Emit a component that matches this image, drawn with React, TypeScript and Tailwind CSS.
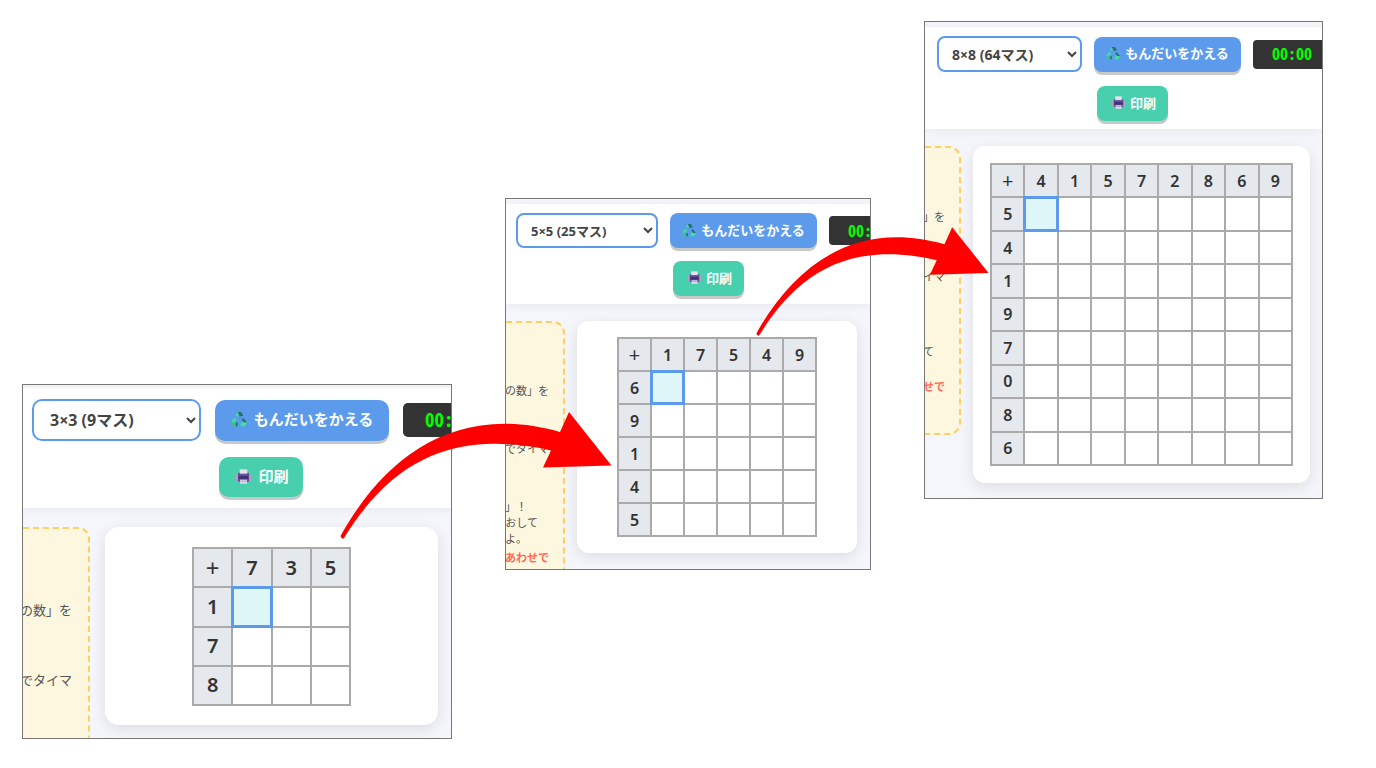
import React, { useState } from 'react';
import clsx from 'clsx';

type Line = { text: string; space: string; className?: string };

interface SheetProps {
  id: string;
  large?: boolean;
  label: string;
  time: string;
  top: number[];
  side: number[];
  lines: Line[];
  className: string;
  toolbarClass: string;
  selectClass: string;
  printRowClass: string;
  noteClass: string;
  cardClass: string;
  tableClass: string;
  rowClass: string;
}

const RecycleIcon: React.FC<{ className: string }> = ({ className }) => (
  <svg viewBox="0 0 16 16" className={className} aria-hidden="true">
    <path d="M4.6 4.2 6.4 1h2.4L7.2 5.8z" fill="#43dda0" />
    <path d="M6.6 1h3.6l2.2 3.8-3.6.8L7.6 3z" fill="#256f6c" />
    <path d="M2.8 7 6 7.6 4 11 .2 11z" fill="#43dda0" />
    <path d="M.2 11h3.6l2.8.6v3.6H2z" fill="#35c48d" />
    <path d="m4.8 11.4 1.8.2v3.6H4.8z" fill="#256f6c" />
    <path d="m12.6 7 3.2 4.4-2 1-3.4-4z" fill="#256f6c" />
    <path d="M9 13.2 11.4 11l4.4.6-1.6 3.6h-3.4z" fill="#43dda0" />
  </svg>
);

const PrinterIcon: React.FC<{ className: string }> = ({ className }) => (
  <svg viewBox="0 0 16 16" className={className} aria-hidden="true">
    <rect x="0" y="4.6" width="16" height="9" rx="2" fill="#b9a0bf" />
    <rect x="2" y="4" width="12" height="9.6" rx="1" fill="#5f50a0" />
    <rect x="4" y="0.4" width="8" height="4.6" fill="#e4e0ee" />
    <rect x="3" y="7.4" width="10" height="3.2" fill="#40326e" />
    <rect x="4.4" y="11.4" width="7.2" height="4.4" fill="#dcd8ea" />
    <rect x="5.4" y="12.4" width="5.2" height="1" fill="#a7a1bd" />
  </svg>
);

const Arrow: React.FC<{ className: string }> = ({ className }) => (
  <svg viewBox="340 412 272 128" className={clsx('absolute z-10 pointer-events-none', className)} aria-hidden="true">
    <path
      d="M340.5 536C384 458 455 402 560 432L569 412 611.5 465.5 543 467.5 551 450.5C460 430 395 455 344 538Q342 540 340.5 536Z"
      fill="#ff0000"
    />
  </svg>
);

const Sheet: React.FC<SheetProps> = (props) => {
  const [size, setSize] = useState(props.label);
  const { large, top, side } = props;

  return (
    <section className={clsx('overflow-hidden border border-[#777] bg-[#f5f6fb]', props.className)}>
      {/* Toolbar */}
      <div className={clsx('relative bg-white shadow-[0_2px_10px_rgba(0,0,0,0.06)] whitespace-nowrap', props.toolbarClass)}>
        <div className={clsx('flex items-center', large ? 'gap-[14px]' : 'gap-3')}>
          <select
            id={props.id}
            aria-label="マスの数"
            value={size}
            onChange={e => setSize(e.target.value)}
            className={clsx(
              "shrink-0 border-2 border-[#5c9bec] bg-white font-bold text-[#444] font-['Noto_Sans','Noto_Sans_CJK_JP',sans-serif]",
              props.selectClass
            )}
          >
            <option>{props.label}</option>
          </select>
          <button
            className={clsx(
              'flex shrink-0 items-center justify-center bg-[#5c9bec] pb-0.5 font-bold text-white',
              large
                ? 'h-[41px] w-[174px] gap-[7px] rounded-[10px] text-[15px] shadow-[0_3px_0_#c8c8c8]'
                : 'h-[35px] w-[147px] gap-[5px] rounded-lg text-[13px] shadow-[0_3px_0_#c8c8c8]'
            )}
          >
            <RecycleIcon className={large ? 'size-4' : 'size-[14px]'} />
            もんだいをかえる
          </button>
          <div
            className={clsx(
              "flex shrink-0 items-center bg-[#333] pb-0.5 font-bold text-[#00ff00] font-['Noto_Sans_Mono_CJK_JP','Noto_Sans_CJK_JP',monospace] [font-feature-settings:'hwid']",
              large ? 'h-[34px] w-24 rounded-[5px] pl-[22px] text-[19px]' : 'h-[29px] w-20 rounded-[4px] pl-[19px] text-base'
            )}
          >
            {props.time}
          </div>
        </div>
        <div className={clsx('flex', props.printRowClass)}>
          <button
            className={clsx(
              'flex items-center justify-center bg-[#48cfae] pb-0.5 font-bold text-white',
              large
                ? 'h-10 w-[84px] gap-[7px] rounded-[10px] pl-[3px] text-[15px] shadow-[0_3px_0_#c8c8c8]'
                : 'h-[35px] w-[71px] gap-[5px] rounded-lg pl-[3px] text-[13px] shadow-[0_3px_0_#c8c8c8]'
            )}
          >
            <PrinterIcon className={large ? 'size-[15px]' : 'size-[13px]'} />
            印刷
          </button>
        </div>
      </div>

      {/* Notes and question grid */}
      <div className="flex items-start">
        <aside
          className={clsx(
            'shrink-0 overflow-hidden border-2 border-l-0 border-dashed border-[#fdd063] bg-[#fef7df] text-[#555] whitespace-nowrap',
            props.noteClass
          )}
        >
          {props.lines.map(line => (
            <p key={line.text} className={clsx('flex justify-end', line.space, line.className)}>{line.text}</p>
          ))}
        </aside>
        <div className={clsx('flex flex-1 justify-center bg-white shadow-[0_4px_15px_rgba(0,0,0,0.1)]', props.cardClass)}>
          <table className={clsx("table-fixed border-collapse text-[#333] font-['Noto_Sans',sans-serif]", large ? 'text-xl' : 'text-base', props.tableClass)}>
            <tbody>
              <tr className={props.rowClass}>
                <th className={clsx('border-2 border-[#aaa] bg-[#e5e8ed] p-0 font-normal leading-none', large ? 'text-2xl' : 'text-xl')}>+</th>
                {top.map(n => (
                  <th key={n} className="border-2 border-[#aaa] bg-[#e5e8ed] p-0 font-semibold">{n}</th>
                ))}
              </tr>
              {side.map((n, r) => (
                <tr key={n} className={props.rowClass}>
                  <th className="border-2 border-[#aaa] bg-[#e5e8ed] p-0 font-semibold">{n}</th>
                  {top.map((m, c) => (
                    <td
                      key={m}
                      className={clsx(
                        'border-2 border-[#aaa] p-0',
                        r === 0 && c === 0 ? 'relative bg-[#dff6f8] outline-3 -outline-offset-2 outline-[#5c9bec]' : 'bg-white'
                      )}
                    />
                  ))}
                </tr>
              ))}
            </tbody>
          </table>
        </div>
      </div>
    </section>
  );
};

export default function App() {
  return (
    <main className="flex min-h-screen items-start gap-[53px] bg-white pl-[22px] pr-[53px] font-['Noto_Sans_CJK_JP',sans-serif]">
      <div className="relative mt-[384px] min-w-0 grow-[430] basis-0">
        <Sheet
          id="size-3"
          large
          label="3×3 (9マス)"
          time="00:00"
          top={[7, 3, 5]}
          side={[1, 7, 8]}
          lines={[
            { text: 'の数」を', space: 'pt-[71px]' },
            { text: 'でタイマ', space: 'pt-[50px]' },
          ]}
          className="pt-[3px]"
          toolbarClass="pt-[11px] pb-[11px] pl-[9px]"
          selectClass="h-[42px] w-[169px] rounded-[10px] px-3 text-base"
          printRowClass="pl-[187px] pt-4"
          noteClass="mt-[19px] h-[227px] w-[67px] rounded-tr-xl pr-4 text-[13px] leading-5 -mb-4"
          cardClass="mt-[19px] mb-[13px] ml-[15px] mr-[13px] rounded-[14px] pt-5 pb-[19px]"
          tableClass="h-[159px] w-[159px]"
          rowClass="h-[39px]"
        />
        <Arrow className="-right-[160px] top-[28px] h-[128px] w-[272px]" />
      </div>

      <div className="relative mt-[198px] min-w-0 grow-[366] basis-0">
        <Sheet
          id="size-5"
          label="5×5 (25マス)"
          time="00:00"
          top={[1, 7, 5, 4, 9]}
          side={[6, 9, 1, 4, 5]}
          lines={[
            { text: 'の数」を', space: 'pt-[59px]' },
            { text: 'でタイマ', space: 'pt-[42px]' },
            { text: '」！', space: 'pt-[42px] pr-[2em]' },
            { text: 'おして', space: 'pr-[1em]' },
            { text: 'よ。', space: 'pr-[2em]' },
            { text: 'あわせで', space: 'pt-[3px]', className: 'font-bold text-[#ff6b57]' },
          ]}
          className="pt-[5px]"
          toolbarClass="pt-[9px] pb-[8px] pl-[10px]"
          selectClass="h-[35px] w-[142px] rounded-lg px-[9px] text-[13px]"
          printRowClass="pl-[157px] pt-[13px]"
          noteClass="mt-[17px] h-[280px] w-[59px] rounded-tr-xl pr-[14px] text-[11px] leading-4 -mb-10"
          cardClass="mt-[17px] mb-4 ml-3 mr-[13px] rounded-xl py-4"
          tableClass="h-[200px] w-[200px]"
          rowClass="h-[33px]"
        />
        <Arrow className="-right-[118px] top-[29px] h-[110px] w-[233px]" />
      </div>

      <div className="mt-[21px] min-w-0 grow-[399] basis-0">
        <Sheet
          id="size-8"
          label="8×8 (64マス)"
          time="00:00"
          top={[4, 1, 5, 7, 2, 8, 6, 9]}
          side={[5, 4, 1, 9, 7, 0, 8, 6]}
          lines={[
            { text: '」を', space: 'pt-[60px]' },
            { text: 'イマ', space: 'pt-[44px]' },
            { text: 'て', space: 'pt-[59px] pr-[1em]' },
            { text: 'せで', space: 'pt-[19px]', className: 'font-bold text-[#ff6b57]' },
          ]}
          className="pt-[5px]"
          toolbarClass="pt-[9px] pb-[8px] pl-[12px]"
          selectClass="h-9 w-[145px] rounded-lg px-[9px] text-sm"
          printRowClass="pl-[160px] pt-[14px]"
          noteClass="mt-[17px] h-[289px] w-9 rounded-r-xl pr-[14px] text-[11px] leading-4"
          cardClass="mt-[17px] mb-[15px] ml-3 mr-3 rounded-xl py-[17px]"
          tableClass="h-[303px] w-[303px]"
          rowClass="h-[33px]"
        />
      </div>
    </main>
  );
}
